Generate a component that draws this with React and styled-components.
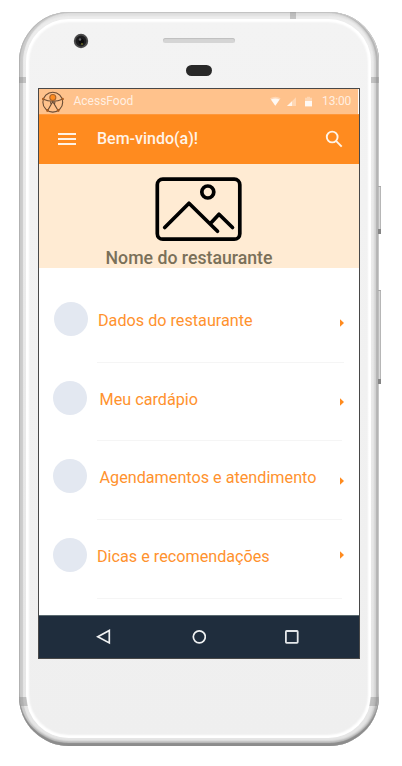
import React from 'react';
import styled, { createGlobalStyle } from 'styled-components';

const GlobalStyle = createGlobalStyle`
  * { box-sizing: border-box; }
  body { margin: 0; background: #fff; font-family: Roboto, sans-serif; }
  svg { display: block; flex: none; }
`;

const Page = styled.div`
  width: 402px;
  height: 766px;
  padding: 12px 0 0 19px;
  overflow: hidden;
  background: #fff;
`;

const Phone = styled.div`
  position: relative;
  width: 360px;
  height: 734px;
  padding: 7px 8px 8px 7px;
  border-radius: 50px;
  background: linear-gradient(180deg, #ededed, #e6e6e6);
  box-shadow:
    inset 0 -3px 1px #8c8c8c,
    inset 1px 0 1px #b4b4b4,
    inset -1px 0 0 #cfcfcf,
    inset 0 1px 1px #c4c4c4,
    inset -3px 0 1px #b4b4b4,
    inset 4px 0 1px #cbcbcb,
    inset 0 -5px 2px #bbb,
    inset -5px 0 2px #d4d4d4,
    inset 0 4px 2px #e0e0e0;
`;

const Face = styled.div`
  display: flex;
  flex-direction: column;
  width: 345px;
  height: 719px;
  padding: 0 11px 0 12px;
  border-radius: 43px;
  background: linear-gradient(180deg, #f3f3f3, #efefef);
  box-shadow: inset 0 0 2px 3px #fff;
`;

const Band = styled.span`
  position: absolute;
  left: ${(p) => p.$x}px;
  top: ${(p) => p.$y}px;
  width: ${(p) => p.$w}px;
  height: ${(p) => p.$h}px;
  background: rgba(130, 130, 130, 0.38);
  transform: skewX(${(p) => p.$skew || 0}deg);
`;

const SideButton = styled.span`
  position: absolute;
  left: 359px;
  top: ${(p) => p.$y}px;
  width: 3px;
  height: ${(p) => p.$h}px;
  border-top: 1px solid #aaa;
  border-bottom: 5px solid #858585;
  background: linear-gradient(90deg, #b0b0b0, #dadada 50%, #a4a4a4);
`;

const TopBezel = styled.div`
  display: flex;
  flex: 0 0 69px;
  flex-direction: column;
  align-items: center;
  padding-top: 19px;
`;

const Speaker = styled.div`
  width: 72px;
  height: 5px;
  border-radius: 3px;
  background: #d5d5d5;
  box-shadow: inset 0 1px 1px #bebebe;
`;

const Sensor = styled.div`
  width: 26px;
  height: 11px;
  margin-top: 22px;
  border-radius: 5.5px;
  background: #282828;
`;

const Camera = styled.svg`
  position: absolute;
  left: 54px;
  top: 21px;
`;

const Screen = styled.div`
  display: flex;
  flex-direction: column;
  width: 322px;
  height: 571px;
  border: 1px solid #484848;
  background: #fff;
`;

const StatusBar = styled.div`
  display: flex;
  align-items: center;
  width: 319px;
  height: 25px;
  padding: 0 7px 0 3px;
  background: #ffc28c;
  color: rgba(255, 255, 255, 0.76);
  font-size: 12px;
`;

const AppName = styled.span`
  margin: -2px auto 0 9.5px;
`;

const StatusIcons = styled.svg`
  margin-right: 9px;
`;

const Clock = styled.span`
  margin-top: -1px;
  font-size: 12px;
  letter-spacing: -0.2px;
`;

const AppBar = styled.header`
  display: flex;
  align-items: center;
  height: 50px;
  padding: 0 16px 2px 19px;
  background: #ff8b1f;
  border-top: 1px solid #ff973a;
`;

const Title = styled.h1`
  margin: 0 auto 0 21px;
  color: #fff4e8;
  font-size: 16px;
  font-weight: 500;
  line-height: 20px;
`;

const Hero = styled.section`
  display: flex;
  flex-direction: column;
  align-items: center;
  height: 104px;
  padding-top: 12px;
  background: #ffebd3;
`;

const Picture = styled.svg`
  margin-right: 1px;
`;

const RestaurantName = styled.h2`
  margin: 4px 0 0;
  padding-right: 20px;
  color: #7a7059;
  font-size: 17.7px;
  font-weight: 500;
  line-height: 22px;
  white-space: nowrap;
`;

const Menu = styled.ul`
  display: flex;
  flex: 1;
  flex-direction: column;
  margin: 0;
  padding: 16px 0 0;
  list-style: none;
`;

const MenuItem = styled.li`
  display: grid;
  grid-template-columns: 58px 1fr 20px;
  grid-template-rows: 77.7px 1px;
`;

const Avatar = styled.span`
  width: 34px;
  height: 34px;
  margin: 18px 0 0 ${(p) => p.$left}px;
  border-radius: 50%;
  background: #e3e8f1;
`;

const Label = styled.span`
  margin: 27px 0 0 ${(p) => p.$left}px;
  color: #ff922e;
  font-size: 16.2px;
  line-height: 20px;
  white-space: nowrap;
`;

const Arrow = styled.svg`
  margin: ${(p) => p.$top}px 0 0 1px;
`;

const Divider = styled.span`
  grid-column: 2 / 4;
  height: 1px;
  margin-right: ${(p) => p.$end}px;
  background: #f5f5f5;
`;

const NavBar = styled.nav`
  display: flex;
  justify-content: space-between;
  align-items: center;
  height: 43px;
  padding: 0 59px 1px 57px;
  border-top: 1px solid #5a6a70;
  background: #1f2d3d;
`;

const items = [
  { text: 'Dados do restaurante', avatar: 15, label: 1, arrow: 35.3, end: 15 },
  { text: 'Meu cardápio', avatar: 14, label: 2.5, arrow: 35.3, end: 17 },
  { text: 'Agendamentos e atendimento', avatar: 14, label: 2.5, arrow: 35.3, end: 17 },
  { text: 'Dicas e recomendações', avatar: 14, label: 0, arrow: 31.3, end: 17 },
];

function Logo() {
  return (
    <svg width="22" height="23" viewBox="0 0 22 23" fill="none" stroke="#684b35" strokeWidth="1.1">
      <circle cx="10.8" cy="12.2" r="9.9" />
      <path d="M.7 9Q11 13.6 21 9M8.5 11.7 9.2 14.3 5.5 20.8M13 11.7 12.4 14.3 16.2 20.8M9.2 14.3 10.8 12 12.4 14.3" />
      <circle cx="10.8" cy="7.5" r="3" fill="#ff8b1f" stroke="#a8642c" />
      <g fill="#a65c22" stroke="none">
        <circle cx="1.2" cy="9" r="1.3" />
        <circle cx="20.6" cy="9" r="1.3" />
        <circle cx="5.5" cy="20.5" r="1.4" />
        <circle cx="16.2" cy="20.5" r="1.4" />
      </g>
    </svg>
  );
}

export default function App() {
  return (
    <>
      <GlobalStyle />
      <Page>
        <Phone>
          <SideButton $y={174} $h={48} />
          <SideButton $y={278} $h={94} />
          <Band $x={0} $y={65} $w={7} $h={6} />
          <Band $x={352} $y={65} $w={8} $h={6} />
          <Band $x={271} $y={0} $w={6} $h={7} />
          <Band $x={1} $y={685} $w={7} $h={9} $skew={9} />
          <Band $x={351} $y={685} $w={8} $h={9} $skew={-9} />
          <Camera width="16" height="16" viewBox="0 0 16 16">
            <circle cx="8" cy="8" r="7.2" fill="#4b4b4b" />
            <circle cx="8" cy="8" r="5.4" fill="#1d1d1f" />
            <circle cx="8.3" cy="8.4" r="2.6" fill="#090909" />
            <circle cx="7" cy="6.5" r="1.2" fill="#67676c" />
            <circle cx="9" cy="11" r=".9" fill="#747326" />
          </Camera>
          <Face>
            <TopBezel>
              <Speaker />
              <Sensor />
            </TopBezel>
            <Screen>
              <StatusBar>
                <Logo />
                <AppName>AcessFood</AppName>
                <StatusIcons width="43" height="12" viewBox="0 0 43 12" fill="#fff">
                  <path d="M0 2.3Q5.3-.8 10.6 2.3L5.3 9.8Z" opacity=".35" />
                  <path d="M1 3.5Q5.3 1.5 9.6 3.5L5.3 9.8Z" opacity=".85" />
                  <path d="M26 1.2V10H17Z" opacity=".35" />
                  <path d="M22 5.2V10H17Z" opacity=".75" />
                  <path d="M37 .8h3v1h2V5h-7V1.8h2Z" opacity=".35" />
                  <path d="M35 5h7v5.4h-7Z" opacity=".9" />
                </StatusIcons>
                <Clock>13:00</Clock>
              </StatusBar>
              <AppBar>
                <svg width="18" height="14" viewBox="0 0 18 14" stroke="#fff2e4">
                  <path d="M0 2h18M0 7h18M0 12h18" strokeWidth="2" />
                </svg>
                <Title>Bem-vindo(a)!</Title>
                <svg width="18" height="18" viewBox="0 0 18 18" fill="none" stroke="#fff4e8" strokeWidth="1.9">
                  <circle cx="7.2" cy="7" r="5.4" />
                  <path d="m11 10.9 5.7 5.7" />
                </svg>
              </AppBar>
              <Hero>
                <Picture width="88" height="67" viewBox="0 0 88 67" fill="none" stroke="#000" strokeWidth="3.7" strokeLinecap="round" strokeLinejoin="round">
                  <rect x="2.3" y="3.2" width="82.5" height="60" rx="5.5" />
                  <circle cx="52.8" cy="16" r="6" />
                  <path d="M9.7 51.5 34 27.2 62.5 55.2M55.2 47.8 64 38.3 77.5 51.5" />
                </Picture>
                <RestaurantName>Nome do restaurante</RestaurantName>
              </Hero>
              <Menu>
                {items.map((item) => (
                  <MenuItem key={item.text}>
                    <Avatar $left={item.avatar} />
                    <Label $left={item.label}>{item.text}</Label>
                    <Arrow $top={item.arrow} width="4" height="8" viewBox="0 0 4 8" fill="#ff8b1f">
                      <path d="M0 .2 4 4 0 7.8Z" />
                    </Arrow>
                    <span />
                    <Divider $end={item.end} />
                  </MenuItem>
                ))}
              </Menu>
              <NavBar>
                <svg width="16" height="16" viewBox="0 0 16 16" fill="none" stroke="#f0f2f3" strokeWidth="1.7">
                  <path d="M1.8 7.7 13.3 1.5V13.9Z" />
                </svg>
                <svg width="16" height="16" viewBox="0 0 16 16" fill="none" stroke="#f0f2f3" strokeWidth="1.7">
                  <circle cx="9.3" cy="7.8" r="6" />
                </svg>
                <svg width="16" height="16" viewBox="0 0 16 16" fill="none" stroke="#e4e7ea" strokeWidth="1.8">
                  <rect x="1.9" y="2" width="11.8" height="11.8" rx=".7" />
                </svg>
              </NavBar>
            </Screen>
          </Face>
        </Phone>
      </Page>
    </>
  );
}
